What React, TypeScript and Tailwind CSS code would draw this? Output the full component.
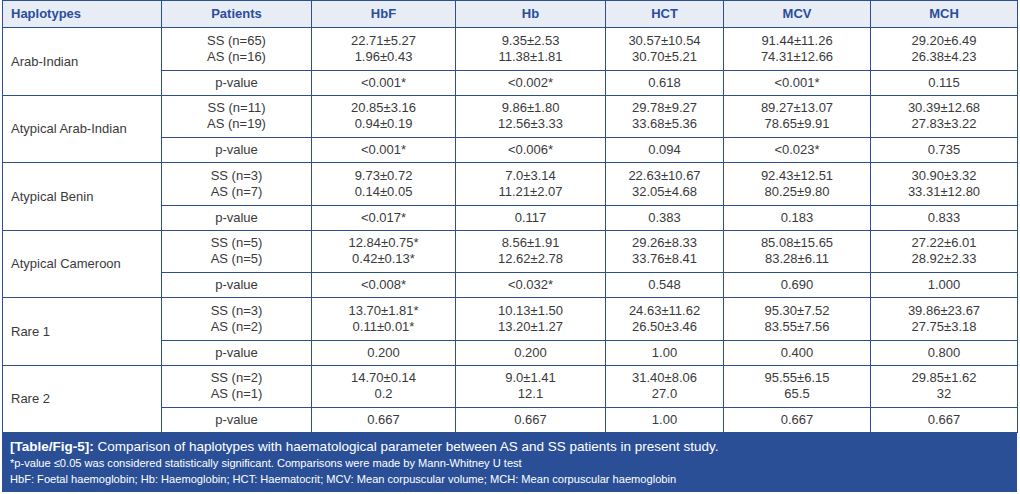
import React from "react";

type Group = {
  name: string;
  pat: [string, string];
  vals: [string, string][];
  p: string[];
};

const groups: Group[] = [
  {
    name: "Arab-Indian",
    pat: ["SS (n=65)", "AS (n=16)"],
    vals: [
      ["22.71±5.27", "1.96±0.43"],
      ["9.35±2.53", "11.38±1.81"],
      ["30.57±10.54", "30.70±5.21"],
      ["91.44±11.26", "74.31±12.66"],
      ["29.20±6.49", "26.38±4.23"],
    ],
    p: ["<0.001*", "<0.002*", "0.618", "<0.001*", "0.115"],
  },
  {
    name: "Atypical Arab-Indian",
    pat: ["SS (n=11)", "AS (n=19)"],
    vals: [
      ["20.85±3.16", "0.94±0.19"],
      ["9.86±1.80", "12.56±3.33"],
      ["29.78±9.27", "33.68±5.36"],
      ["89.27±13.07", "78.65±9.91"],
      ["30.39±12.68", "27.83±3.22"],
    ],
    p: ["<0.001*", "<0.006*", "0.094", "<0.023*", "0.735"],
  },
  {
    name: "Atypical Benin",
    pat: ["SS (n=3)", "AS (n=7)"],
    vals: [
      ["9.73±0.72", "0.14±0.05"],
      ["7.0±3.14", "11.21±2.07"],
      ["22.63±10.67", "32.05±4.68"],
      ["92.43±12.51", "80.25±9.80"],
      ["30.90±3.32", "33.31±12.80"],
    ],
    p: ["<0.017*", "0.117", "0.383", "0.183", "0.833"],
  },
  {
    name: "Atypical Cameroon",
    pat: ["SS (n=5)", "AS (n=5)"],
    vals: [
      ["12.84±0.75*", "0.42±0.13*"],
      ["8.56±1.91", "12.62±2.78"],
      ["29.26±8.33", "33.76±8.41"],
      ["85.08±15.65", "83.28±6.11"],
      ["27.22±6.01", "28.92±2.33"],
    ],
    p: ["<0.008*", "<0.032*", "0.548", "0.690", "1.000"],
  },
  {
    name: "Rare 1",
    pat: ["SS (n=3)", "AS (n=2)"],
    vals: [
      ["13.70±1.81*", "0.11±0.01*"],
      ["10.13±1.50", "13.20±1.27"],
      ["24.63±11.62", "26.50±3.46"],
      ["95.30±7.52", "83.55±7.56"],
      ["39.86±23.67", "27.75±3.18"],
    ],
    p: ["0.200", "0.200", "1.00", "0.400", "0.800"],
  },
  {
    name: "Rare 2",
    pat: ["SS (n=2)", "AS (n=1)"],
    vals: [
      ["14.70±0.14", "0.2"],
      ["9.0±1.41", "12.1"],
      ["31.40±8.06", "27.0"],
      ["95.55±6.15", "65.5"],
      ["29.85±1.62", "32"],
    ],
    p: ["0.667", "0.667", "1.00", "0.667", "0.667"],
  },
];

const headers = ["Patients", "HbF", "Hb", "HCT", "MCV", "MCH"];
const widths = [159, 150, 144, 150, 118, 147, 147];

export default function App() {
  return (
    <div
      className="w-[1020px] h-[494px] bg-white pl-[2px] pt-0"
      style={{ fontFamily: '"Liberation Sans", Arial, sans-serif' }}
    >
      <div className="w-[1015px]">
        <table className="w-[1015px] table-fixed border-collapse text-[13px] text-[#3a3a3a]">
          <colgroup>
            {widths.map((w, i) => (
              <col key={i} style={{ width: w }} />
            ))}
          </colgroup>
          <thead>
            <tr className="h-[27px] bg-[#e8ecf5]">
              <th className="border border-[#2c4f8d] pl-[8px] text-left font-bold text-[#2a4e9a]">
                Haplotypes
              </th>
              {headers.map((h) => (
                <th
                  key={h}
                  className="border border-[#2c4f8d] text-center font-bold text-[#2a4e9a]"
                >
                  {h}
                </th>
              ))}
            </tr>
          </thead>
          <tbody>
            {groups.map((g) => (
              <React.Fragment key={g.name}>
                <tr className="h-[42.5px]">
                  <td
                    rowSpan={2}
                    className="border border-[#2c4f8d] pl-[8px] text-left align-middle"
                  >
                    {g.name}
                  </td>
                  <td className="border border-[#2c4f8d] text-center leading-[16px]">
                    <div>{g.pat[0]}</div>
                    <div>{g.pat[1]}</div>
                  </td>
                  {g.vals.map((v, i) => (
                    <td
                      key={i}
                      className="border border-[#2c4f8d] text-center leading-[16px]"
                    >
                      <div>{v[0]}</div>
                      <div>{v[1]}</div>
                    </td>
                  ))}
                </tr>
                <tr className="h-[25px]">
                  <td className="border border-[#2c4f8d] text-center">p-value</td>
                  {g.p.map((p, i) => (
                    <td key={i} className="border border-[#2c4f8d] text-center">
                      {p}
                    </td>
                  ))}
                </tr>
              </React.Fragment>
            ))}
          </tbody>
        </table>
        <div className="bg-[#2a4f97] px-[8px] pt-[5px] pb-[4px] text-white">
          <div className="text-[13.5px] leading-[17px]">
            <span className="font-bold">[Table/Fig-5]:</span> Comparison of haplotypes with
            haematological parameter between AS and SS patients in present study.
          </div>
          <div className="text-[11.1px] leading-[16px]">
            *p-value ≤0.05 was considered statistically significant. Comparisons were made by
            Mann-Whitney U test
          </div>
          <div className="text-[11.1px] leading-[17px]">
            HbF: Foetal haemoglobin; Hb: Haemoglobin; HCT: Haematocrit; MCV: Mean corpuscular
            volume; MCH: Mean corpuscular haemoglobin
          </div>
        </div>
      </div>
    </div>
  );
}
